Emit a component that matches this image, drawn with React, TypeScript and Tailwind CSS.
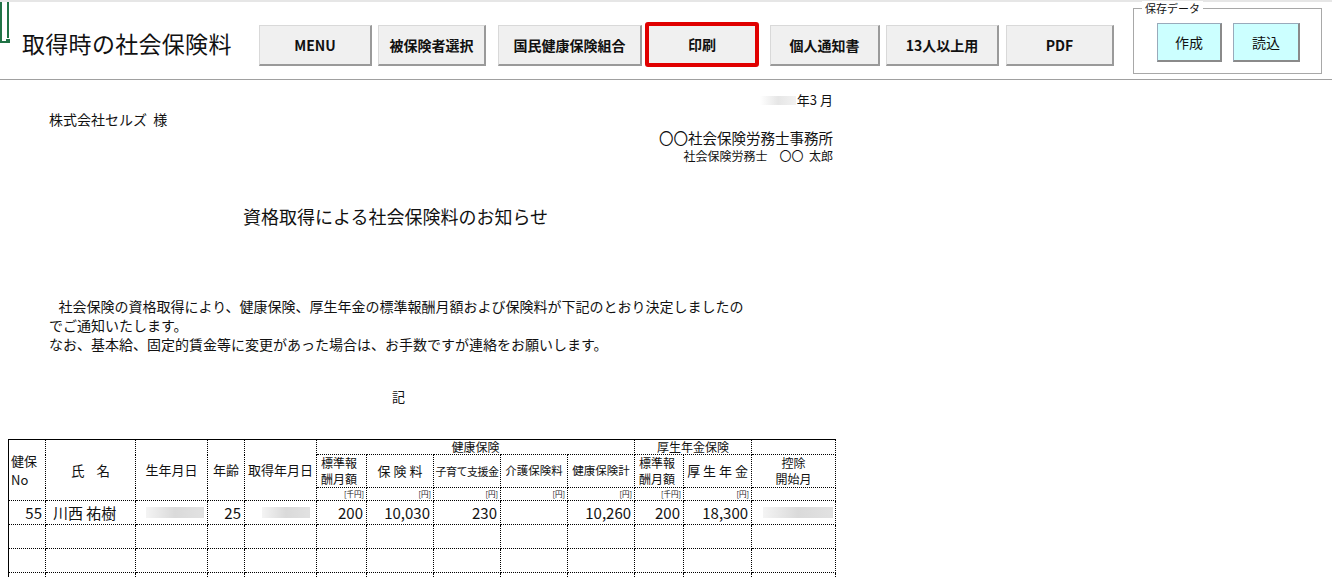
import React from 'react'

const FONT = { fontFamily: '"Noto Sans CJK JP", "Noto Sans", sans-serif' }

const btn =
  'h-[41px] mt-[23px] flex items-center justify-center bg-[#f0f0f0] border-t border-l border-[#d9d9d9] border-r-2 border-b-2 border-r-[#9a9a9a] border-b-[#9a9a9a] text-[14px] font-bold text-[#111]'

const td = 'border border-dotted border-black p-0'

function Blur({ w }: { w: string }) {
  return <div className={`h-[11px] ${w} bg-gradient-to-r from-[#f4f4f4] via-[#dadada] to-[#e2e2e2] blur-[0.6px]`} />
}

function TwoLine({ a, b, cls, lh = 'leading-[16px]' }: { a: string; b: string; cls: string; lh?: string }) {
  return (
    <div className={cls}>
      <div className={lh}>{a}</div>
      <div className={lh}>{b}</div>
    </div>
  )
}

export default function App() {
  return (
    <div className="w-[1332px] h-[577px] bg-white overflow-hidden text-[#111]" style={FONT}>
      {/* ツールバー */}
      <div className="relative h-[80px] border-t-2 border-[#e6e6e6] border-b border-b-[#a0a0a0] flex items-start">
        <svg className="absolute left-0 top-0" width="10" height="44" viewBox="0 0 10 44">
          <path d="M1 -2 V40 H6" fill="none" stroke="#217346" strokeWidth="2" />
          <path d="M8 -2 V36" fill="none" stroke="#217346" strokeWidth="2" />
          <rect x="6" y="37" width="4" height="4" fill="#217346" />
        </svg>
        <div className="w-[259px] pl-[22px] pt-[26px] text-[23px] leading-[30px] tracking-[0.3px]">取得時の社会保険料</div>
        <div className={`${btn} w-[113px]`}>MENU</div>
        <div className={`${btn} w-[108px] ml-[6px]`}>被保険者選択</div>
        <div className={`${btn} w-[144px] ml-[12px]`}>国民健康保険組合</div>
        <div className="w-[114px] h-[45px] mt-[20px] ml-[3px] border-4 border-[#e00000] rounded-[3px] bg-[#f0f0f0] flex items-center justify-center text-[14px] font-bold">
          印刷
        </div>
        <div className={`${btn} w-[110px] ml-[11px]`}>個人通知書</div>
        <div className={`${btn} w-[113px] ml-[6px]`}>13人以上用</div>
        <div className={`${btn} w-[108px] ml-[7px]`}>PDF</div>
        <div className="relative w-[189px] h-[66px] mt-[6px] ml-[19px] border border-[#a8a8a8] flex items-start pl-[23px] pt-[14px] gap-[11px]">
          <span className="absolute left-[8px] -top-[8px] bg-white px-[3px] text-[11px] leading-[14px]">保存データ</span>
          <div className="w-[65px] h-[39px] bg-[#ccffff] border border-[#9ab] border-r-2 border-b-2 border-r-[#8a8a8a] border-b-[#8a8a8a] flex items-center justify-center text-[14px]">作成</div>
          <div className="w-[67px] h-[39px] bg-[#ccffff] border border-[#9ab] border-r-2 border-b-2 border-r-[#8a8a8a] border-b-[#8a8a8a] flex items-center justify-center text-[14px]">読込</div>
        </div>
      </div>

      {/* 通知書 */}
      <div className="w-[835px]">
        <div className="flex items-center justify-end pr-[2px] mt-[12px] h-[16px] text-[13px] leading-[16px]">
          <div className="w-[36px] h-[9px] mr-[1px] bg-gradient-to-r from-white via-[#e6e6e6] to-[#f2f2f2]" />
          <span>年3 月</span>
        </div>
        <div className="pl-[49px] mt-[3px] text-[14px] leading-[16px]">株式会社セルズ&nbsp;&nbsp;様</div>
        <div className="text-right pr-[2px] mt-[2px] text-[14.5px] leading-[18px]">〇〇社会保険労務士事務所</div>
        <div className="text-right pr-[2px] mt-[1px] text-[12px] leading-[16px]">社会保険労務士　〇〇&nbsp;&nbsp;太郎</div>
        <div className="pl-[243px] mt-[41px] text-[18px] leading-[22px]">資格取得による社会保険料のお知らせ</div>
        <div className="pl-[49px] mt-[70px] text-[14px] leading-[19px]">
          <div>&nbsp;&nbsp;&nbsp;社会保険の資格取得により、健康保険、厚生年金の標準報酬月額および保険料が下記のとおり決定しましたの</div>
          <div>でご通知いたします。</div>
          <div>なお、基本給、固定的賃金等に変更があった場合は、お手数ですが連絡をお願いします。</div>
        </div>
        <div className="pl-[392px] mt-[35px] text-[13px] leading-[16px]">記</div>

        <table className="ml-[8px] mt-[34px] w-[828px] table-fixed border-collapse">
          <colgroup>
            {[37, 90, 72, 37, 72, 50, 67, 67, 67, 67, 49, 68, 84].map((w, i) => (
              <col key={i} style={{ width: w }} />
            ))}
          </colgroup>
          <tbody>
            <tr className="h-[15px] text-[12px] leading-[14px]">
              <td rowSpan={3} className={`${td} align-middle`} style={{ borderTopStyle: 'solid', borderLeftStyle: 'solid' }}>
                <TwoLine a="健保" b="No" cls="text-[13px] pl-[2px]" lh="leading-[19px]" />
              </td>
              <td rowSpan={3} className={`${td} text-center text-[13.5px]`} style={{ borderTopStyle: 'solid' }}>氏&nbsp;&nbsp;&nbsp;&nbsp;名</td>
              <td rowSpan={3} className={`${td} text-center text-[13px]`} style={{ borderTopStyle: 'solid' }}>生年月日</td>
              <td rowSpan={3} className={`${td} text-center text-[13px]`} style={{ borderTopStyle: 'solid' }}>年齢</td>
              <td rowSpan={3} className={`${td} text-center text-[13px]`} style={{ borderTopStyle: 'solid' }}>取得年月日</td>
              <td colSpan={5} className={`${td} text-center`} style={{ borderTopStyle: 'solid' }}>健康保険</td>
              <td colSpan={2} className={`${td} text-center`} style={{ borderTopStyle: 'solid' }}>厚生年金保険</td>
              <td className={td} style={{ borderTopStyle: 'solid' }}></td>
            </tr>
            <tr className="h-[33px]">
              <td className={td}><TwoLine a="標準報" b="酬月額" cls="text-[12px] pl-[4px]" /></td>
              <td className={`${td} text-center text-[13px]`}>保&nbsp;険&nbsp;料</td>
              <td className={`${td} text-center text-[11px] tracking-[-0.5px] whitespace-nowrap`}>子育て支援金</td>
              <td className={`${td} text-center text-[11.5px] whitespace-nowrap`}>介護保険料</td>
              <td className={`${td} text-center text-[11.5px] whitespace-nowrap`}>健康保険計</td>
              <td className={td}><TwoLine a="標準報" b="酬月額" cls="text-[12px] pl-[4px]" /></td>
              <td className={`${td} text-center text-[13px]`}>厚&nbsp;生&nbsp;年&nbsp;金</td>
              <td className={td}><TwoLine a="控除" b="開始月" cls="text-[12px] text-center" /></td>
            </tr>
            <tr className="h-[13px] text-[7.5px] leading-[10px]">
              <td className={`${td} text-right pr-[2px]`}>[千円]</td>
              <td className={`${td} text-right pr-[2px]`}>[円]</td>
              <td className={`${td} text-right pr-[2px]`}>[円]</td>
              <td className={`${td} text-right pr-[2px]`}>[円]</td>
              <td className={`${td} text-right pr-[2px]`}>[円]</td>
              <td className={`${td} text-right pr-[2px]`}>[千円]</td>
              <td className={`${td} text-right pr-[2px]`}>[円]</td>
              <td className={td}></td>
            </tr>
            <tr className="h-[24px] text-[15px] leading-[18px]">
              <td className={`${td} text-right pr-[3px]`} style={{ borderLeftStyle: 'solid' }}>55</td>
              <td className={`${td} pl-[7px]`}>川西&nbsp;祐樹</td>
              <td className={td}><div className="flex justify-end pr-[3px]"><Blur w="w-[58px]" /></div></td>
              <td className={`${td} text-right pr-[3px]`}>25</td>
              <td className={td}><div className="flex justify-end pr-[6px]"><Blur w="w-[48px]" /></div></td>
              <td className={`${td} text-right pr-[3px]`}>200</td>
              <td className={`${td} text-right pr-[3px]`}>10,030</td>
              <td className={`${td} text-right pr-[3px]`}>230</td>
              <td className={td}></td>
              <td className={`${td} text-right pr-[3px]`}>10,260</td>
              <td className={`${td} text-right pr-[3px]`}>200</td>
              <td className={`${td} text-right pr-[3px]`}>18,300</td>
              <td className={td}><div className="flex justify-end pr-[2px]"><Blur w="w-[70px]" /></div></td>
            </tr>
            {[0, 1, 2].map(r => (
              <tr key={r} className="h-[24px]">
                {Array.from({ length: 13 }).map((_, i) => (
                  <td key={i} className={td} style={i === 0 ? { borderLeftStyle: 'solid' } : undefined}></td>
                ))}
              </tr>
            ))}
          </tbody>
        </table>
      </div>
    </div>
  )
}
